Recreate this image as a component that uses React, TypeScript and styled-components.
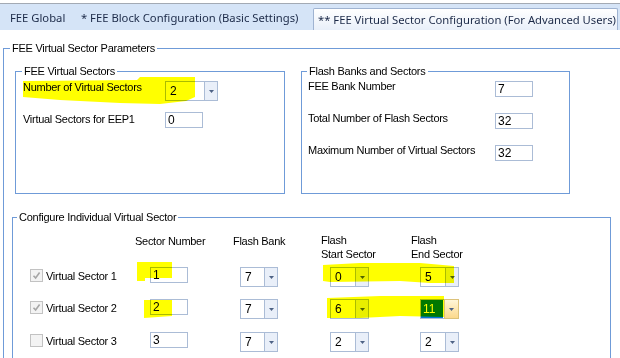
import React from "react";
import styled, { createGlobalStyle, css } from "styled-components";

const GlobalStyle = createGlobalStyle`
  html, body { margin: 0; padding: 0; background: #ffffff; }
  body {
    font-family: "Liberation Sans", Arial, sans-serif;
    font-size: 11px;
    color: #000000;
  }
  * { box-sizing: border-box; }
`;

const Screen = styled.div`
  position: relative;
  width: 620px;
  height: 358px;
  overflow: hidden;
  background: #ffffff;
  display: flex;
  flex-direction: column;
`;

const TabBar = styled.div`
  flex: none;
  margin-top: 3px;
  height: 27px;
  border-top: 1px solid #a3aab4;
  background: #d5e4f7;
  display: flex;
  align-items: flex-end;
  padding-left: 3px;
`;

const Tab = styled.div<{ $w: number; $active?: boolean }>`
  flex: none;
  width: ${(p) => p.$w}px;
  display: flex;
  align-items: center;
  white-space: nowrap;
  font-family: "Noto Sans", "Open Sans", sans-serif;
  font-size: 11.25px;
  color: #1c2a48;
  ${(p) =>
    p.$active
      ? css`
          height: 22px;
          margin-left: 3px;
          padding: 0 0 0 4px;
          border: 1px solid #9fb3d1;
          border-bottom: none;
          border-radius: 2px 2px 0 0;
          background: linear-gradient(#ffffff, #e8eff9);
        `
      : css`
          height: 20px;
          margin-bottom: 3px;
          padding-left: 7px;
        `}
`;

const Body = styled.div`
  flex: 1;
  padding: 12px 0 0 3px;
`;

const Group = styled.fieldset<{ $w: number; $h: number; $pl: number; $pt: number }>`
  margin: 0;
  min-width: 0;
  flex: none;
  width: ${(p) => p.$w}px;
  height: ${(p) => p.$h}px;
  border: 1px solid #6f9bd8;
  padding: ${(p) => p.$pt}px 0 0 ${(p) => p.$pl}px;
`;

const Legend = styled.legend<{ $ml: number }>`
  padding: 0 2px;
  margin-left: ${(p) => p.$ml}px;
  line-height: 13px;
  font-size: 11px;
  letter-spacing: -0.25px;
`;

const GroupRow = styled.div`
  display: flex;
  gap: 16px;
  padding-left: 3px;
`;

const ConfigWrap = styled.div`
  margin-top: 17px;
`;

const FormGrid = styled.div<{ $labelW: number; $rows: string; $gap: number }>`
  display: grid;
  grid-template-columns: ${(p) => p.$labelW}px 1fr;
  grid-template-rows: ${(p) => p.$rows};
  row-gap: ${(p) => p.$gap}px;
  padding-top: 3px;
  align-items: start;
`;

const Label = styled.div<{ $dy?: number }>`
  line-height: 13px;
  white-space: nowrap;
  letter-spacing: -0.28px;
  margin-top: ${(p) => p.$dy ?? 0}px;
`;

const TextBox = styled.div<{ $w?: number }>`
  width: ${(p) => p.$w ?? 38}px;
  height: 16px;
  border: 1px solid #abbcd6;
  background: #ffffff;
  padding-left: 2px;
  line-height: 14px;
  font-size: 12px;
`;

const ComboBox = styled.div<{ $w: number }>`
  width: ${(p) => p.$w}px;
  height: 20px;
  display: flex;
  border: 1px solid #abbcd6;
  background: #ffffff;
`;

const ComboText = styled.div<{ $selected?: boolean }>`
  flex: 1;
  display: flex;
  align-items: center;
  font-size: 12px;
  padding-left: 4px;
  ${(p) =>
    p.$selected &&
    css`
      flex: none;
      width: 22px;
      padding-left: 2px;
      background: #0078d7;
      color: #ffffff;
    `}
`;

const ComboSpacer = styled.div`
  flex: 1;
`;

const ComboButton = styled.div<{ $hot?: boolean }>`
  flex: none;
  width: 13px;
  display: flex;
  align-items: center;
  justify-content: center;
  border-left: 1px solid #abbcd6;
  background: #e9eff9;
  ${(p) =>
    p.$hot &&
    css`
      width: 15px;
      margin: -1px -1px -1px 0;
      border: 1px solid #dcc27a;
      background: linear-gradient(#fff6d8, #fcd98c);
    `}
`;

const Arrow = () => (
  <svg width="5" height="3" viewBox="0 0 5 3">
    <polygon points="0,0 5,0 2.5,3" fill="#4d6285" />
  </svg>
);

const Combo = ({
  w,
  value,
  selected,
  hot,
}: {
  w: number;
  value: string;
  selected?: boolean;
  hot?: boolean;
}) => (
  <ComboBox $w={w}>
    <ComboText $selected={selected}>{value}</ComboText>
    {selected && <ComboSpacer />}
    <ComboButton $hot={hot}>
      <Arrow />
    </ComboButton>
  </ComboBox>
);

const SectorGrid = styled.div`
  display: grid;
  margin-left: 11px;
  grid-template-columns: 105px 98px 88px 90px 1fr;
  grid-template-rows: 34px 32px 33px 32px;
  align-items: start;
`;

const Header = styled.div<{ $dy?: number }>`
  line-height: 14px;
  letter-spacing: -0.28px;
  white-space: nowrap;
  margin-top: ${(p) => p.$dy ?? 0}px;
`;

const Cell = styled.div<{ $indent: number }>`
  padding-left: ${(p) => p.$indent}px;
`;

const CheckCell = styled.div`
  display: flex;
  align-items: center;
  gap: 3px;
  height: 17px;
  white-space: nowrap;
  letter-spacing: -0.28px;
`;

const CheckBox = styled.span`
  flex: none;
  width: 13px;
  height: 13px;
  border: 1px solid #c2c2c2;
  background: #f3f3f3;
  display: flex;
  align-items: center;
  justify-content: center;
`;

const CheckMark = () => (
  <svg width="9" height="9" viewBox="0 0 9 9">
    <path d="M1.5 4.8 L3.6 7 L7.6 1.6" fill="none" stroke="#a6a6a6" strokeWidth="1.6" />
  </svg>
);

const Highlights = styled.svg`
  position: absolute;
  left: 0;
  top: 0;
  width: 620px;
  height: 358px;
  pointer-events: none;
  mix-blend-mode: multiply;
`;

const rows = [
  { n: "1", checked: true, sector: "1", bank: "7", start: "0", end: "5" },
  { n: "2", checked: true, sector: "2", bank: "7", start: "6", end: "11", sel: true },
  { n: "3", checked: false, sector: "3", bank: "7", start: "2", end: "2" },
];

export default function App() {
  return (
    <Screen>
      <GlobalStyle />
      <TabBar>
        <Tab $w={71}>FEE Global</Tab>
        <Tab $w={236}>* FEE Block Configuration (Basic Settings)</Tab>
        <Tab $w={305} $active>
          ** FEE Virtual Sector Configuration (For Advanced Users)
        </Tab>
      </TabBar>
      <Body>
        <Group $w={660} $h={400} $pl={8} $pt={10}>
          <Legend $ml={-2}>FEE Virtual Sector Parameters</Legend>
          <GroupRow>
            <Group $w={270} $h={129} $pl={7} $pt={0}>
              <Legend $ml={-1}>FEE Virtual Sectors</Legend>
              <FormGrid $labelW={142} $rows="20px 16px" $gap={11}>
                <Label>Number of Virtual Sectors</Label>
                <Combo w={53} value="2" />
                <Label $dy={1}>Virtual Sectors for EEP1</Label>
                <TextBox>0</TextBox>
              </FormGrid>
            </Group>
            <Group $w={269} $h={129} $pl={6} $pt={0}>
              <Legend $ml={-1}>Flash Banks and Sectors</Legend>
              <FormGrid $labelW={187} $rows="16px 16px 16px" $gap={16}>
                <Label $dy={-1}>FEE Bank Number</Label>
                <TextBox>7</TextBox>
                <Label $dy={-1}>Total Number of Flash Sectors</Label>
                <TextBox>32</TextBox>
                <Label $dy={-1}>Maximum Number of Virtual Sectors</Label>
                <TextBox>32</TextBox>
              </FormGrid>
            </Group>
          </GroupRow>
          <ConfigWrap>
            <Group $w={599} $h={160} $pl={6} $pt={9}>
              <Legend $ml={-2}>Configure Individual Virtual Sector</Legend>
              <SectorGrid>
                <div />
                <Header $dy={1}>Sector Number</Header>
                <Header $dy={1}>Flash Bank</Header>
                <Header>
                  Flash
                  <br />
                  Start Sector
                </Header>
                <Header>
                  Flash
                  <br />
                  End Sector
                </Header>
                {rows.map((r) => (
                  <React.Fragment key={r.n}>
                    <CheckCell>
                      <CheckBox>{r.checked && <CheckMark />}</CheckBox>
                      Virtual Sector {r.n}
                    </CheckCell>
                    <Cell $indent={15}>
                      <TextBox>{r.sector}</TextBox>
                    </Cell>
                    <Cell $indent={7}>
                      <Combo w={38} value={r.bank} />
                    </Cell>
                    <Cell $indent={9}>
                      <Combo w={39} value={r.start} />
                    </Cell>
                    <Cell $indent={9}>
                      <Combo w={39} value={r.end} selected={r.sel} hot={r.sel} />
                    </Cell>
                  </React.Fragment>
                ))}
              </SectorGrid>
            </Group>
          </ConfigWrap>
        </Group>
      </Body>
      <Highlights viewBox="0 0 620 358">
        <polygon
          fill="#ffff00"
          points="23,81 137,80 140,77 195,77 195,97 186,101 160,104 120,103 60,100 23,97"
        />
        <polygon fill="#ffff00" points="137,262 172,262 172,278 145,278 145,281 137,281" />
        <polygon fill="#ffff00" points="144,300 172,300 172,316 144,318" />
        <polygon
          fill="#ffff00"
          points="323,265 360,263 420,263 454,266 454,283 430,283 400,281 330,282 323,281"
        />
        <polygon
          fill="#ffff00"
          points="327,298 380,296 444,296 444,317 400,316 360,318 327,318"
        />
      </Highlights>
    </Screen>
  );
}
